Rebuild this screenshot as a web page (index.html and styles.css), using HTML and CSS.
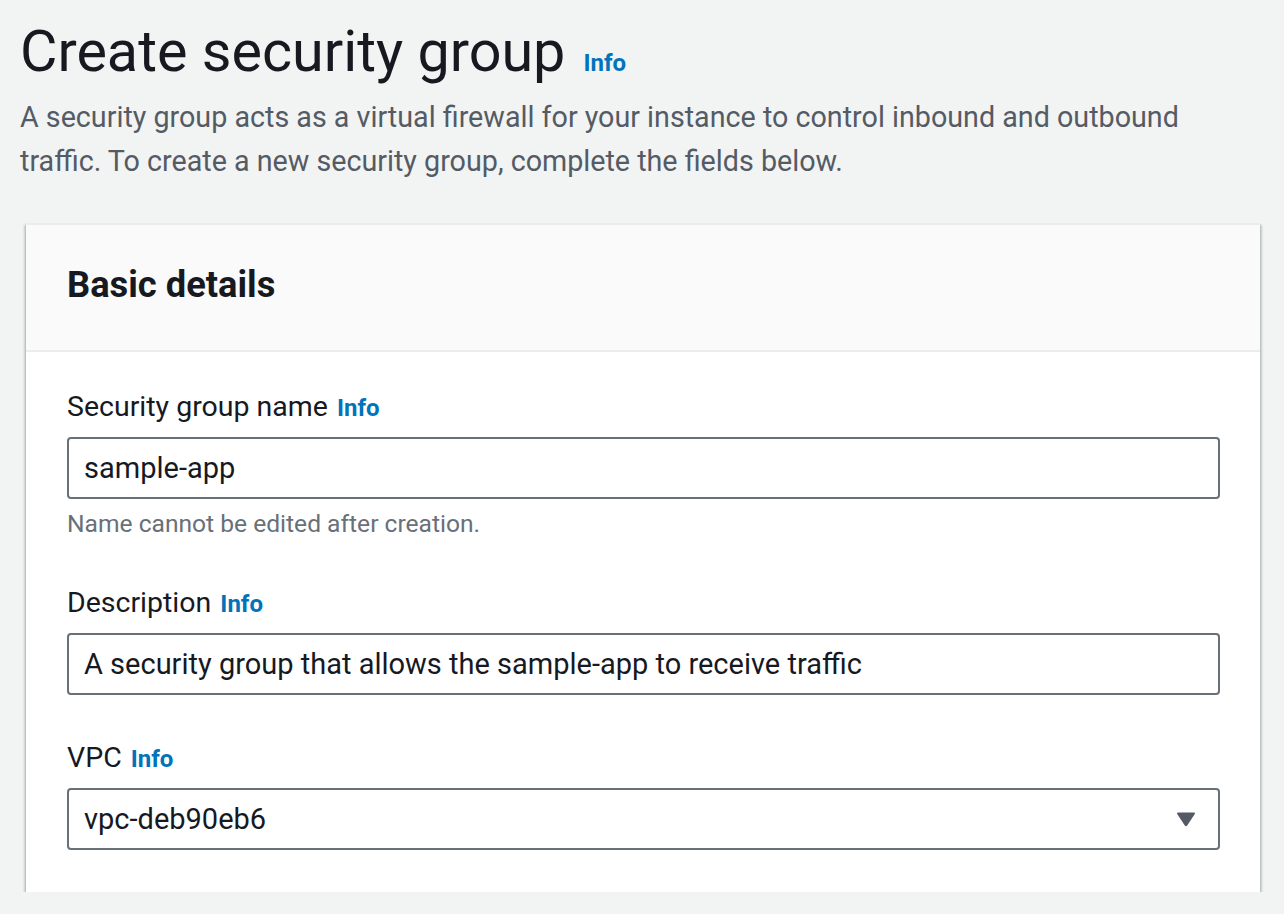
FILE: index.html
```html
<!DOCTYPE html>
<html lang="en">
<head>
<meta charset="utf-8">
<title>Create security group</title>
<link rel="stylesheet" href="styles.css">
</head>
<body>
<main class="page">
  <header class="page-header">
    <h1 class="title">Create security group <a class="info info-title" href="#">Info</a></h1>
    <p class="desc">A security group acts as a virtual firewall for your instance to control inbound and outbound traffic. To create a new security group, complete the fields below.</p>
  </header>
  <section class="card">
    <div class="card-header">
      <h2 class="card-title">Basic details</h2>
    </div>
    <div class="card-body">
      <div class="field">
        <label class="label" for="sg-name">Security group name <a class="info" href="#">Info</a></label>
        <input class="input" id="sg-name" type="text" value="sample-app" readonly>
        <div class="hint">Name cannot be edited after creation.</div>
      </div>
      <div class="field">
        <label class="label" for="sg-desc">Description <a class="info" href="#">Info</a></label>
        <input class="input" id="sg-desc" type="text" value="A security group that allows the sample-app to receive traffic" readonly>
      </div>
      <div class="field">
        <label class="label">VPC <a class="info" href="#">Info</a></label>
        <div class="select">
          <span class="select-value">vpc-deb90eb6</span>
          <svg class="caret" width="20" height="16" viewBox="0 0 20 16" aria-hidden="true">
            <path d="M2 1.5 H18 Q19.6 1.5 18.8 3 L11.2 14.6 Q10 16 8.8 14.6 L1.2 3 Q0.4 1.5 2 1.5 Z" fill="#545b64"/>
          </svg>
        </div>
      </div>
    </div>
  </section>
</main>
</body>
</html>
```

FILE: styles.css
```css
* { box-sizing: border-box; }

html, body {
  margin: 0;
  background: #f2f3f3;
}

body {
  font-family: Roboto, "Noto Sans", "Liberation Sans", sans-serif;
  color: #16191f;
}

.page {
  padding: 16px 24px 0 20px;
}

.page-header {
  display: flex;
  flex-direction: column;
}

.title {
  margin: 0;
  font-size: 57.5px;
  line-height: 72px;
  font-weight: 400;
  color: #16191f;
  display: flex;
  align-items: baseline;
  gap: 18px;
}

.info {
  color: #0073bb;
  font-weight: 700;
  font-size: 24px;
  line-height: 1;
  text-decoration: none;
  margin-left: 2px;
}

.info-title {
  margin-left: 0;
}

.desc {
  margin: 7px 0 0;
  font-size: 28.7px;
  line-height: 44px;
  color: #545b64;
}

.card {
  margin: 40px 0 0 6px;
  background: #ffffff;
  border-top: 2px solid #eaeded;
  box-shadow: 0 2px 2px 0 rgba(0, 28, 36, 0.3),
              2px 2px 2px 0 rgba(0, 28, 36, 0.15),
              -2px 2px 2px 0 rgba(0, 28, 36, 0.15);
}

.card-header {
  background: #fafafa;
  padding: 38px 40px 43px 41px;
  border-bottom: 2px solid #eaeded;
}

.card-title {
  margin: 0;
  font-size: 36.3px;
  line-height: 44px;
  font-weight: 700;
  color: #16191f;
}

.card-body {
  padding: 33px 40px 42px 41px;
  display: flex;
  flex-direction: column;
  gap: 41px;
}

.field {
  display: flex;
  flex-direction: column;
}

.label {
  font-size: 28.5px;
  line-height: 44px;
  color: #16191f;
  margin-bottom: 8px;
}

.input,
.select {
  height: 62px;
  width: 100%;
  border: 2px solid #687078;
  border-radius: 4px;
  background: #ffffff;
  padding: 0 22px 0 15px;
  font-family: Roboto, "Noto Sans", "Liberation Sans", sans-serif;
  font-size: 29px;
  color: #16191f;
  outline: none;
}

.select {
  display: flex;
  align-items: center;
  justify-content: space-between;
}

.caret {
  display: block;
  flex: none;
}

.hint {
  margin-top: 9px;
  font-size: 24.6px;
  line-height: 32px;
  color: #687078;
}
```
